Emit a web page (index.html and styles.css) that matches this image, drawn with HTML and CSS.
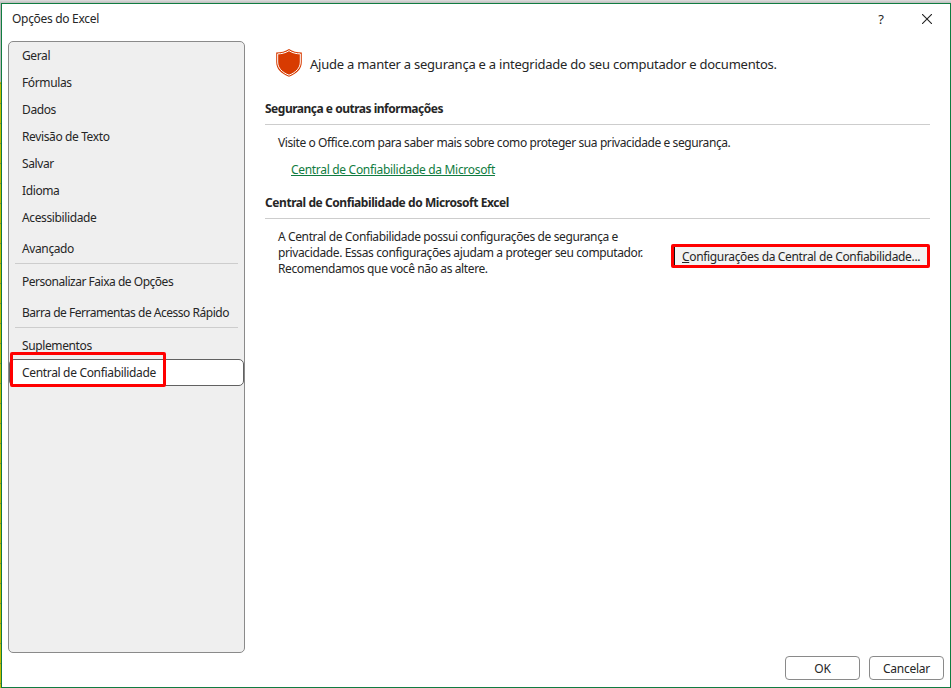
FILE: index.html
```html
<!DOCTYPE html>
<html lang="pt-BR">
<head>
<meta charset="utf-8">
<title>Opções do Excel</title>
<link rel="stylesheet" href="styles.css">
</head>
<body>
<main class="dialog">
  <header class="titlebar">
    <h1 class="title">Opções do Excel</h1>
    <span class="help">?</span>
    <svg class="close" width="10" height="10" viewBox="0 0 10 10"><path d="M0 0L10 10M10 0L0 10" fill="none" stroke="#222" stroke-width="1.1"/></svg>
  </header>
  <div class="body">
    <nav class="sidebar">
      <a class="item">Geral</a>
      <a class="item">Fórmulas</a>
      <a class="item">Dados</a>
      <a class="item">Revisão de Texto</a>
      <a class="item">Salvar</a>
      <a class="item">Idioma</a>
      <a class="item">Acessibilidade</a>
      <a class="item spaced">Avançado</a>
      <hr class="separator">
      <a class="item long">Personalizar Faixa de Opções</a>
      <a class="item spaced long">Barra de Ferramentas de Acesso Rápido</a>
      <hr class="separator">
      <a class="item">Suplementos</a>
      <a class="item selected">Central de Confiabilidade<span class="marker"></span></a>
    </nav>
    <section class="content">
      <div class="intro">
        <svg class="shield" width="28" height="30" viewBox="0 0 28 30"><path d="M14 1C10.500 3.500 6 4.500 1.200 4.500V14C1.200 21 6 25.500 14 28.800C22 25.500 26.800 21 26.800 14V4.500C22 4.500 17.500 3.500 14 1Z" fill="#d83b01"/><path d="M14 2.700C10.500 5 6.500 5.800 2.700 5.900V14C2.700 20 7 24.300 14 27.200C21 24.300 25.300 20 25.300 14V5.900C21.500 5.800 17.500 5 14 2.700Z" fill="none" stroke="#fff" stroke-width="1"/></svg>
        <span class="lead">Ajude a manter a segurança e a integridade do seu computador e documentos.</span>
      </div>
      <h2 class="heading first">Segurança e outras informações</h2>
      <p class="text visit">Visite o Office.com para saber mais sobre como proteger sua privacidade e segurança.</p>
      <a class="link">Central de Confiabilidade da Microsoft</a>
      <h2 class="heading second">Central de Confiabilidade do Microsoft Excel</h2>
      <div class="trust">
        <p class="text">A Central de Confiabilidade possui configurações de segurança e<br>privacidade. Essas configurações ajudam a proteger seu computador.<br>Recomendamos que você não as altere.</p>
        <button class="settings"><span class="settings-label"><u>C</u>onfigurações da Central de Confiabilidade...</span></button>
      </div>
    </section>
  </div>
  <footer class="footer">
    <button class="button">OK</button>
    <button class="button">Cancelar</button>
  </footer>
</main>
</body>
</html>
```
FILE: styles.css
```css
* { box-sizing: border-box; }
body {
  margin: 0;
  width: 951px;
  height: 688px;
  padding: 3px 0 0 1px;
  overflow: hidden;
  background:
    linear-gradient(#dedede, #bdbdbd) 0 0 / 100% 3px no-repeat,
    linear-gradient(#b9b9b9 82px, transparent 82px),
    repeating-linear-gradient(#c4bc00 0 3px, #7d8a3c 3px 4px, #c4bc00 4px 20px);
  color: #262626;
  font: 12px/16px "Noto Sans", sans-serif;
}
h1, h2, p { margin: 0; }
.dialog {
  display: flex;
  flex-direction: column;
  width: 950px;
  height: 685px;
  border: 1px solid #107c41;
  background: #fff;
}
.titlebar {
  display: flex;
  align-items: center;
  height: 31px;
  padding: 0 18px 0 10px;
}
.title { flex: 1; padding-bottom: 2px; font-size: 12px; font-weight: 400; letter-spacing: -0.31px; }
.help { margin-right: 38px; padding-bottom: 2px; font-size: 13px; }
.close { display: block; margin-bottom: 1px; }
.body { display: flex; padding: 6px 20px 0 6px; }
.sidebar {
  width: 237px;
  height: 612px;
  border: 1px solid #8a8a8a;
  border-radius: 5px;
  background: #efefef;
}
.item {
  position: relative;
  display: block;
  height: 27px;
  padding-left: 13px;
  line-height: 27px;
  letter-spacing: -0.38px;
  white-space: nowrap;
}
.long { letter-spacing: -0.48px; }
.spaced { margin-top: 4px; }
.separator { height: 1px; margin: 1px 6px 4px; border: 0; background: #cdcdcd; }
.selected {
  border: 1px solid #616161;
  border-radius: 5px;
  background: #fff;
  padding-left: 12px;
  line-height: 25px;
  letter-spacing: -0.33px;
}
.marker {
  position: absolute;
  left: 0;
  top: -8px;
  width: 156px;
  height: 35px;
  border: 3px solid #f00;
  border-radius: 2px;
}
.content { flex: 1; margin-left: 20px; }
.intro { display: flex; align-items: center; height: 45px; padding-left: 10px; }
.shield { display: block; margin-bottom: 2px; }
.lead { margin-left: 7px; font-size: 13px; letter-spacing: -0.235px; }
.heading {
  height: 24px;
  border-bottom: 1px solid #cdcdcd;
  font-size: 12px;
  line-height: 16px;
  letter-spacing: -0.49px;
}
.first { margin-top: 15px; }
.second { margin-top: 17px; letter-spacing: -0.43px; }
.text { letter-spacing: -0.385px; white-space: nowrap; }
.visit { margin: 10px 0 11px 13px; letter-spacing: -0.405px; }
.link {
  display: block;
  width: max-content;
  margin-left: 26px;
  color: #107c41;
  text-decoration: underline;
  letter-spacing: -0.31px;
}
.trust { display: flex; justify-content: space-between; padding: 10px 0 0 13px; }
button { padding: 0; font: inherit; color: inherit; letter-spacing: -0.25px; }
.settings {
  width: 259px;
  height: 24px;
  margin-top: 15px;
  border: 3px solid #f00;
  border-radius: 2px;
  background: #f3f3f3;
  letter-spacing: -0.34px;
}
.settings-label {
  display: block;
  height: 18px;
  padding-left: 7px;
  border-left: 1px solid #111;
  line-height: 20px;
  text-align: left;
  white-space: nowrap;
}
.footer { display: flex; justify-content: flex-end; gap: 9px; padding: 3px 6px 0 0; }
.button {
  width: 75px;
  height: 24px;
  padding-top: 2px;
  border: 1px solid #8a8a8a;
  border-radius: 4px;
  background: #fff;
}
```
